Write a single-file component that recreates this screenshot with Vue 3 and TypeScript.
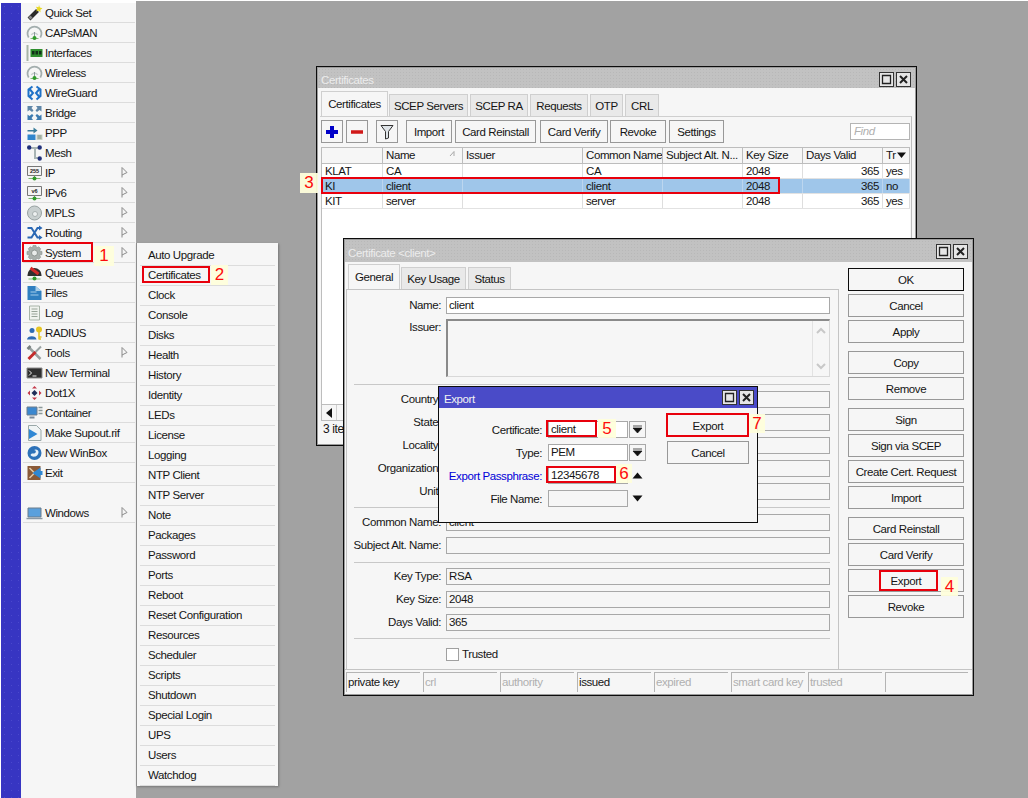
<script setup lang="ts">
interface Shape { d: string; fill?: string; stroke?: string; w?: number }
interface Icon { shapes: Shape[]; label?: string }
interface MenuItem { name: string; arrow?: boolean; icon: string }

const dome: Shape[] = [
  { d: 'M2.2 12.5A7 7 0 1 1 13.800 12.5', fill: 'none', stroke: '#a3aeae', w: 1.8 },
  { d: 'M4.800 10A3.500 3.500 0 0 1 11.200 10', fill: 'none', stroke: '#c9d0d0', w: 1.5 },
  { d: 'M8 7V13', fill: 'none', stroke: '#8a9a9a', w: 1 },
  { d: 'M4 13.500H12', fill: 'none', stroke: '#7fb874', w: 1 },
  { d: 'M6 13a2 2 0 1 0 4 0a2 2 0 1 0 -4 0', fill: '#2f9a2a' },
]
const screen: Shape[] = [
  { d: 'M1 1.500H15V10.500H1Z', fill: '#f4f4f4', stroke: '#777', w: 1 },
  { d: 'M8 10.500V14', fill: 'none', stroke: '#888', w: 1 },
  { d: 'M2 13.500H14', fill: 'none', stroke: '#7fb874', w: 1 },
  { d: 'M6 13.500a2 2 0 1 0 4 0a2 2 0 1 0 -4 0', fill: '#2f9a2a' },
]
const icons: Record<string, Icon> = {
  quick: { shapes: [
    { d: 'M2.500 14L11 5.500', stroke: '#2a2a2a', w: 4, fill: 'none' },
    { d: 'M3 13.500L5 11.500', stroke: '#888', w: 3, fill: 'none' },
    { d: 'M12.500 0L13.400 2.600L16 3.200L13.900 4.800L14 7.400L12.200 5.600L9.800 6.400L10.800 4L9.400 1.800L12 2.200Z', fill: '#e8d820' },
  ] },
  dome: { shapes: dome },
  iface: { shapes: [
    { d: 'M1 0V16', stroke: '#a6b4a6', w: 2, fill: 'none' },
    { d: 'M4 4H16V12H4Z', fill: '#2f8f2f' },
    { d: 'M5.500 6H8V9.500H5.500ZM9 6H11.500V9.500H9ZM12.500 6H15V9.500H12.500Z', fill: '#12301a' },
  ] },
  wg: { shapes: [
    { d: 'M6 1.500L2 4.500V11L6 14.500M3.500 4.500L6.500 8L3.500 11.500', fill: 'none', stroke: '#1f72c8', w: 2 },
    { d: 'M10 1.500L14 4.500V11L10 14.500M12.500 4.500L9.500 8L12.500 11.500', fill: 'none', stroke: '#1f72c8', w: 2 },
  ] },
  bridge: { shapes: [
    { d: 'M1 1H6.500L5 3L7 5.500L5.500 7L3 5L1 6.500Z', fill: '#5f86a8' },
    { d: 'M15 1H9.500L11 3L9 5.500L10.500 7L13 5L15 6.500Z', fill: '#5f86a8' },
    { d: 'M1 15H6.500L5 13L7 10.500L5.500 9L3 11L1 9.500Z', fill: '#3d7bb0' },
    { d: 'M15 15H9.500L11 13L9 10.500L10.500 9L13 11L15 9.500Z', fill: '#3d7bb0' },
  ] },
  ppp: { shapes: [
    { d: 'M1 5H7V2.500L11 5.500L7 8.500V6.500H1Z', fill: '#3a7d9a' },
    { d: 'M1 9.500H9V15H1Z', fill: '#2f86cc' },
    { d: 'M10 9.500H16V15H10Z', fill: '#c8d2c8' },
    { d: 'M11 11H15M11 13H15', stroke: '#7a8a7a', w: 1, fill: 'none' },
  ] },
  mesh: { shapes: [
    { d: 'M3 3H8.500V13H13M8.500 3H13', fill: 'none', stroke: '#a8b4b4', w: 2 },
    { d: 'M0.500 2.500a2.200 2.200 0 1 0 4.400 0a2.200 2.200 0 1 0 -4.400 0ZM11 2.500a2.200 2.200 0 1 0 4.400 0a2.200 2.200 0 1 0 -4.400 0ZM11 13.500a2.200 2.200 0 1 0 4.400 0a2.200 2.200 0 1 0 -4.400 0Z', fill: '#20307a' },
  ] },
  ip: { shapes: screen, label: '255' },
  ipv6: { shapes: screen, label: 'v6' },
  mpls: { shapes: [
    { d: 'M1 8a7 7 0 1 0 14 0a7 7 0 1 0 -14 0Z', fill: '#c9d0d0', stroke: '#98a2a2', w: 1 },
    { d: 'M6 9a2.500 2.500 0 1 0 5 0a2.500 2.500 0 1 0 -5 0Z', fill: '#eef1f1', stroke: '#a8b0b0', w: 1 },
  ] },
  routing: { shapes: [
    { d: 'M1 3H5L11 12.500H14M1 12.500H5L11 3H14', fill: 'none', stroke: '#2b68b4', w: 2 },
    { d: 'M12.500 0.500L16 3L12.500 5.500ZM12.500 10L16 12.500L12.500 15Z', fill: '#2b68b4' },
  ] },
  system: { shapes: [
    { d: 'M6.500 0.500H9.500L10 3L12.300 1.800L14.200 3.700L13 6L15.500 6.500V9.500L13 10L14.200 12.300L12.300 14.200L10 13L9.500 15.500H6.500L6 13L3.700 14.200L1.800 12.300L3 10L0.500 9.500V6.500L3 6L1.800 3.700L3.700 1.800L6 3Z', fill: '#a9b0ad', stroke: '#8a928e', w: 0.6 },
    { d: 'M5 8a3 3 0 1 0 6 0a3 3 0 1 0 -6 0Z', fill: '#e9ecea', stroke: '#8d9490', w: 1 },
  ] },
  queues: { shapes: [
    { d: 'M1 10A7 7 0 0 1 15 10V11H1Z', fill: '#2e2e2e' },
    { d: 'M4 3L12 9', stroke: '#d02828', w: 3, fill: 'none' },
    { d: 'M2 14H14', stroke: '#7fb874', w: 1, fill: 'none' },
    { d: 'M6 13.500a2 2 0 1 0 4 0a2 2 0 1 0 -4 0', fill: '#2f9a2a' },
  ] },
  files: { shapes: [
    { d: 'M1 1H9L15 6V15H1Z', fill: '#2f7fc0' },
    { d: 'M9 1V6H15Z', fill: '#a9cfe8' },
    { d: 'M4 7H10M4 10H12', stroke: '#7eb4dc', w: 1.500, fill: 'none' },
  ] },
  log: { shapes: [
    { d: 'M3 1H13V15H3Z', fill: '#f0f3ee', stroke: '#a8b4a8', w: 1 },
    { d: 'M5 4H11M5 6.500H11M5 9H11M5 11.500H11', stroke: '#98a498', w: 1, fill: 'none' },
  ] },
  radius: { shapes: [
    { d: 'M3 5.500a2.500 2.500 0 1 0 5 0a2.500 2.500 0 1 0 -5 0Z', fill: '#2e6cb4' },
    { d: 'M0.500 14.500C0.500 10 10 10 10 14.500Z', fill: '#2e6cb4' },
    { d: 'M9.500 4.500a3 3 0 1 0 6 0a3 3 0 1 0 -6 0Z', fill: '#e6c522' },
    { d: 'M12.500 7V14.500M12.500 12H15M12.500 14H14.500', stroke: '#e6c522', w: 1.500, fill: 'none' },
  ] },
  tools: { shapes: [
    { d: 'M2 2L14 14', stroke: '#98a0a0', w: 2.500, fill: 'none' },
    { d: 'M1 4L4 1', stroke: '#777f7f', w: 2.500, fill: 'none' },
    { d: 'M14.500 1.500L9 7', stroke: '#9aa2a2', w: 2, fill: 'none' },
    { d: 'M9 7L2 14', stroke: '#c22c2c', w: 3, fill: 'none' },
  ] },
  term: { shapes: [
    { d: 'M0.500 3H15.500V13H0.500Z', fill: '#2f2f2f', stroke: '#8c8c8c', w: 1 },
    { d: 'M2.500 5.500L5 8L2.500 10.500M6 11H10', fill: 'none', stroke: '#f0f0f0', w: 1 },
  ] },
  dot1x: { shapes: [
    { d: 'M8 5L11 8L8 11L5 8Z', fill: '#1f2f5a' },
    { d: 'M8 1L5.500 3.500H10.500ZM8 15L5.500 12.500H10.500ZM1 8L3.500 5.500V10.500ZM15 8L12.500 5.500V10.500Z', fill: '#c43a4a' },
  ] },
  container: { shapes: [
    { d: 'M0.500 2H10.500V10H0.500Z', fill: '#3b88d0', stroke: '#6c7c8c', w: 1 },
    { d: 'M3 12.500H8', stroke: '#7a8a9a', w: 2, fill: 'none' },
    { d: 'M12 2.500H16M12 5.500H16M12 8.500H16', stroke: '#8a9898', w: 1.500, fill: 'none' },
  ] },
  supout: { shapes: [
    { d: 'M2 0.500H10L14.500 5V15.500H2Z', fill: '#f0f4f4', stroke: '#9aa8a8', w: 1 },
    { d: 'M2.500 4L11 9L2.500 14Z', fill: '#2f88d4' },
  ] },
  winbox: { shapes: [
    { d: 'M1 8a7 7 0 1 0 14 0a7 7 0 1 0 -14 0Z', fill: '#2d72b8' },
    { d: 'M4 10C6 13 12 12 12 7C12 5 9.500 3.500 7.500 5C10 5 10 8 7.500 8.500C6 8.800 5 8 4 10Z', fill: '#e8f1f8' },
  ] },
  exit: { shapes: [
    { d: 'M1 1H14V15H1Z', fill: '#8a5a38' },
    { d: 'M3 3L8 8L3 13', fill: 'none', stroke: '#e2c8a8', w: 1.500 },
    { d: 'M6 8L14 2.500V6H16V10H14V13.500Z', fill: '#2f88d4' },
  ] },
  windows: { shapes: [
    { d: 'M1.500 3H14.500V12H1.500Z', fill: '#5aa0dc', stroke: '#6a7c8c', w: 1 },
    { d: 'M0 13.500H16', stroke: '#8a98a4', w: 1.500, fill: 'none' },
  ] },
}

const menu: MenuItem[] = [
  { name: 'Quick Set', icon: 'quick' },
  { name: 'CAPsMAN', icon: 'dome' },
  { name: 'Interfaces', icon: 'iface' },
  { name: 'Wireless', icon: 'dome' },
  { name: 'WireGuard', icon: 'wg' },
  { name: 'Bridge', icon: 'bridge' },
  { name: 'PPP', icon: 'ppp' },
  { name: 'Mesh', icon: 'mesh' },
  { name: 'IP', icon: 'ip', arrow: true },
  { name: 'IPv6', icon: 'ipv6', arrow: true },
  { name: 'MPLS', icon: 'mpls', arrow: true },
  { name: 'Routing', icon: 'routing', arrow: true },
  { name: 'System', icon: 'system', arrow: true },
  { name: 'Queues', icon: 'queues' },
  { name: 'Files', icon: 'files' },
  { name: 'Log', icon: 'log' },
  { name: 'RADIUS', icon: 'radius' },
  { name: 'Tools', icon: 'tools', arrow: true },
  { name: 'New Terminal', icon: 'term' },
  { name: 'Dot1X', icon: 'dot1x' },
  { name: 'Container', icon: 'container' },
  { name: 'Make Supout.rif', icon: 'supout' },
  { name: 'New WinBox', icon: 'winbox' },
  { name: 'Exit', icon: 'exit' },
]
const subItems: string[] = ['Auto Upgrade', 'Certificates', 'Clock', 'Console', 'Disks', 'Health', 'History', 'Identity', 'LEDs', 'License', 'Logging', 'NTP Client', 'NTP Server', 'Note', 'Packages', 'Password', 'Ports', 'Reboot', 'Reset Configuration', 'Resources', 'Scheduler', 'Scripts', 'Shutdown', 'Special Login', 'UPS', 'Users', 'Watchdog']

const certTabs = ['SCEP Servers', 'SCEP RA', 'Requests', 'OTP', 'CRL']
const columns = ['', 'Name', 'Issuer', 'Common Name', 'Subject Alt. N...', 'Key Size', 'Days Valid', 'Tr']
const rows = [
  { sel: false, cells: ['KLAT', 'CA', '', 'CA', '', '2048', '365', 'yes'] },
  { sel: true, cells: ['KI', 'client', '', 'client', '', '2048', '365', 'no'] },
  { sel: false, cells: ['KIT', 'server', '', 'server', '', '2048', '365', 'yes'] },
]
const subjectGroup = ['Country', 'State', 'Locality', 'Organization', 'Unit']
const nameGroup = [{ l: 'Common Name', v: 'client' }, { l: 'Subject Alt. Name', v: '' }]
const keyGroup = [{ l: 'Key Type', v: 'RSA' }, { l: 'Key Size', v: '2048' }, { l: 'Days Valid', v: '365' }]
const buttonGroups = [
  ['OK', 'Cancel', 'Apply'],
  ['Copy', 'Remove'],
  ['Sign', 'Sign via SCEP', 'Create Cert. Request', 'Import'],
  ['Card Reinstall', 'Card Verify', 'Export', 'Revoke'],
]
const flags = [
  { t: 'private key', on: true }, { t: 'crl', on: false }, { t: 'authority', on: false }, { t: 'issued', on: true },
  { t: 'expired', on: false }, { t: 'smart card key', on: false }, { t: 'trusted', on: false }, { t: '', on: false },
]
const redBoxes = [
  [22, 242, 71, 20], [142, 266, 68, 17], [321, 177, 459, 17], [879, 570, 59, 21],
  [546, 420, 51, 17], [546, 466, 70, 17], [666, 413, 83, 24],
]
const marks = [
  { n: '1', x: 94, y: 246, w: 20, h: 20 }, { n: '2', x: 211, y: 265, w: 17, h: 20 },
  { n: '3', x: 300, y: 173, w: 18, h: 20 }, { n: '4', x: 941, y: 577, w: 17, h: 19 },
  { n: '5', x: 598, y: 419, w: 18, h: 19 }, { n: '6', x: 616, y: 464, w: 16, h: 19 },
  { n: '7', x: 749, y: 414, w: 16, h: 19 },
]
function boxStyle(b: number[]) {
  return { left: b[0] + 'px', top: b[1] + 'px', width: b[2] + 'px', height: b[3] + 'px' }
}
function markStyle(m: { x: number; y: number; w: number; h: number }) {
  return { left: m.x + 'px', top: m.y + 'px', width: m.w + 'px', height: m.h + 'px' }
}
</script>

<template>
  <div class="screen">
    <div class="rail"></div>
    <nav class="menu">
      <div v-for="m in menu" :key="m.name" class="menu-row">
        <svg class="ico" viewBox="0 0 16 16" width="16" height="16">
          <path v-for="(s, i) in icons[m.icon].shapes" :key="i" :d="s.d" :fill="s.fill ?? 'none'" :stroke="s.stroke" :stroke-width="s.w" />
          <text v-if="icons[m.icon].label" x="8" y="8.300" text-anchor="middle" class="ico-text">{{ icons[m.icon].label }}</text>
        </svg>
        <span>{{ m.name }}</span>
        <svg v-if="m.arrow" class="more" viewBox="0 0 7 11" width="7" height="11"><path d="M1 .5V10.500M1 .5L6 5.500L1 8" fill="none" stroke="#8a8a8a" /></svg>
      </div>
      <div class="menu-gap"></div>
      <div class="menu-row">
        <svg class="ico" viewBox="0 0 16 16" width="16" height="16">
          <path v-for="(s, i) in icons.windows.shapes" :key="i" :d="s.d" :fill="s.fill ?? 'none'" :stroke="s.stroke" :stroke-width="s.w" />
        </svg>
        <span>Windows</span>
        <svg class="more" viewBox="0 0 7 11" width="7" height="11"><path d="M1 .5V10.500M1 .5L6 5.500L1 8" fill="none" stroke="#8a8a8a" /></svg>
      </div>
    </nav>
    <main class="desk"></main>

    <div class="submenu">
      <div v-for="s in subItems" :key="s" class="sub-row">{{ s }}</div>
    </div>

    <section class="win win-cert">
      <div class="win-in">
        <header class="title inactive">
          <span>Certificates</span>
          <div class="title-btns">
            <button class="tb"><svg viewBox="0 0 13 13" width="13" height="13"><path d="M2.500 2.500H10.500V10.500H2.500Z" fill="none" stroke="#222" stroke-width="1.300" /></svg></button>
            <button class="tb"><svg viewBox="0 0 13 13" width="13" height="13"><path d="M3 3L10 10M10 3L3 10" fill="none" stroke="#222" stroke-width="2" /></svg></button>
          </div>
        </header>
        <div class="tabs cert-tabs">
          <div class="tab active">Certificates</div>
          <div v-for="t in certTabs" :key="t" class="tab">{{ t }}</div>
        </div>
        <div class="cert-panel">
          <div class="toolbar">
            <button class="btn tool"><svg viewBox="0 0 14 14" width="14" height="14"><path d="M7 1V13M1 7H13" stroke="#0000c8" stroke-width="4" fill="none" /></svg></button>
            <button class="btn tool"><svg viewBox="0 0 14 14" width="14" height="14"><path d="M1 7H13" stroke="#d01818" stroke-width="3.500" fill="none" /></svg></button>
            <button class="btn tool gap"><svg viewBox="0 0 14 16" width="14" height="16"><path d="M1 1.500H13L8.500 7.500V14L5.500 15V7.500Z" fill="#dfe4e8" stroke="#333" /></svg></button>
            <button class="btn t-import">Import</button>
            <button class="btn t-reinstall">Card Reinstall</button>
            <button class="btn t-verify">Card Verify</button>
            <button class="btn t-revoke">Revoke</button>
            <button class="btn t-settings">Settings</button>
            <div class="find">Find</div>
          </div>
          <div class="table">
            <div class="t-row t-head">
              <div v-for="(c, i) in columns" :key="i" class="t-cell">
                {{ c }}
                <svg v-if="c === 'Name'" class="sort" viewBox="0 0 7 7" width="7" height="7"><path d="M1 6L5 1.500V6" fill="none" stroke="#a8a8a8" /></svg>
                <svg v-if="c === 'Tr'" class="col-menu" viewBox="0 0 11 7" width="11" height="7"><path d="M1 .5H10L5.500 6Z" fill="#111" /></svg>
              </div>
            </div>
            <div v-for="r in rows" :key="r.cells[0]" class="t-row" :class="{ selected: r.sel }">
              <div v-for="(c, i) in r.cells" :key="i" class="t-cell" :class="{ right: i === 6 }">{{ c }}</div>
            </div>
          </div>
          <div class="hscroll">
            <div class="hs-btn"><svg viewBox="0 0 8 10" width="8" height="10"><path d="M7 0V10L1 5Z" fill="#111" /></svg></div>
          </div>
          <div class="cert-status">3 items</div>
        </div>
      </div>
    </section>

    <section class="win win-dialog">
      <div class="win-in">
        <header class="title inactive">
          <span>Certificate &lt;client&gt;</span>
          <div class="title-btns">
            <button class="tb"><svg viewBox="0 0 13 13" width="13" height="13"><path d="M2.500 2.500H10.500V10.500H2.500Z" fill="none" stroke="#222" stroke-width="1.300" /></svg></button>
            <button class="tb"><svg viewBox="0 0 13 13" width="13" height="13"><path d="M3 3L10 10M10 3L3 10" fill="none" stroke="#222" stroke-width="2" /></svg></button>
          </div>
        </header>
        <div class="dialog-main">
          <div class="dialog-left">
            <div class="tabs dlg-tabs">
              <div class="tab active">General</div>
              <div class="tab">Key Usage</div>
              <div class="tab">Status</div>
            </div>
            <div class="form">
              <div class="f-row"><label>Name:</label><div class="field white">client</div></div>
              <div class="f-row issuer-row">
                <label>Issuer:</label>
                <div class="issuer">
                  <div class="issuer-bar">
                    <svg viewBox="0 0 10 7" width="10" height="7"><path d="M1 6L5 2L9 6" fill="none" stroke="#c8c8c8" stroke-width="2" /></svg>
                    <svg viewBox="0 0 10 7" width="10" height="7"><path d="M1 1L5 5L9 1" fill="none" stroke="#c8c8c8" stroke-width="2" /></svg>
                  </div>
                </div>
              </div>
              <div class="sep s7"></div>
              <div class="f-list">
                <div v-for="l in subjectGroup" :key="l" class="f-row"><label>{{ l }}:</label><div class="field"></div></div>
              </div>
              <div class="sep s7"></div>
              <div class="f-list">
                <div v-for="f in nameGroup" :key="f.l" class="f-row"><label>{{ f.l }}:</label><div class="field">{{ f.v }}</div></div>
              </div>
              <div class="sep s8"></div>
              <div class="f-list">
                <div v-for="f in keyGroup" :key="f.l" class="f-row"><label>{{ f.l }}:</label><div class="field">{{ f.v }}</div></div>
              </div>
              <div class="sep s7"></div>
              <div class="check-row"><span class="check"></span><span>Trusted</span></div>
            </div>
          </div>
          <div class="dialog-btns">
            <div v-for="(g, gi) in buttonGroups" :key="gi" class="btn-group">
              <button v-for="b in g" :key="b" class="btn side" :class="{ primary: b === 'OK' }">{{ b }}</button>
            </div>
          </div>
        </div>
        <div class="status">
          <div v-for="(f, i) in flags" :key="i" class="flag" :class="{ off: !f.on, last: i === 7 }">{{ f.t }}</div>
        </div>
      </div>
    </section>

    <section class="win win-export">
      <div class="win-in">
        <header class="title active-title">
          <span>Export</span>
          <div class="title-btns">
            <button class="tb"><svg viewBox="0 0 13 13" width="13" height="13"><path d="M2.500 2.500H10.500V10.500H2.500Z" fill="none" stroke="#222" stroke-width="1.300" /></svg></button>
            <button class="tb"><svg viewBox="0 0 13 13" width="13" height="13"><path d="M3 3L10 10M10 3L3 10" fill="none" stroke="#222" stroke-width="2" /></svg></button>
          </div>
        </header>
        <div class="export-body">
          <div class="export-form">
            <div class="e-row">
              <label>Certificate:</label><div class="field white e-field">client</div>
              <button class="drop"><svg viewBox="0 0 11 9" width="11" height="9"><path d="M1 1H10M1 3H10L5.500 8Z" fill="#111" stroke="#111" stroke-width=".7" /></svg></button>
            </div>
            <div class="e-row">
              <label>Type:</label><div class="field white e-field">PEM</div>
              <button class="drop"><svg viewBox="0 0 11 9" width="11" height="9"><path d="M1 1H10M1 3H10L5.500 8Z" fill="#111" stroke="#111" stroke-width=".7" /></svg></button>
            </div>
            <div class="e-row">
              <label class="blue">Export Passphrase:</label><div class="field white e-field">12345678</div>
              <svg class="tri" viewBox="0 0 11 7" width="11" height="7"><path d="M.5 6.500H10.500L5.500 .5Z" fill="#111" /></svg>
            </div>
            <div class="e-row">
              <label>File Name:</label><div class="field e-field"></div>
              <svg class="tri" viewBox="0 0 11 7" width="11" height="7"><path d="M.5 .5H10.500L5.500 6.500Z" fill="#111" /></svg>
            </div>
          </div>
          <div class="export-btns">
            <button class="btn e-btn">Export</button>
            <button class="btn e-btn">Cancel</button>
          </div>
        </div>
      </div>
    </section>

    <div v-for="(m, i) in marks" :key="i" class="mark" :style="markStyle(m)">{{ m.n }}</div>
    <div v-for="(b, i) in redBoxes" :key="'b' + i" class="red-box" :style="boxStyle(b)"></div>
  </div>
</template>

<style>
html, body { margin: 0; background: #fff; }
</style>

<style scoped>
* { box-sizing: border-box; }
.screen {
  position: relative; width: 1028px; height: 798px; overflow: hidden; display: flex;
  font-family: "Liberation Sans", Arial, sans-serif; font-size: 11.5px; letter-spacing: -0.4px; color: #151515; background: #fff;
}
.rail {
  width: 20px; margin: 3px 0 0 1px;
  background-color: #3735c2;
  background-image: radial-gradient(#4a48cc 0.6px, transparent 0.7px);
  background-size: 7px 7px;
}
.menu { width: 115px; margin-top: 3px; background: #f6f6f6; padding-left: 2px; }
.menu-row {
  height: 20px; display: flex; align-items: center; gap: 2px; position: relative;
  border-bottom: 1px solid #dcdcdc; margin-right: 1px; padding-left: 3px;
}
.menu-gap { height: 20px; }
.ico { flex: none; width: 17px; height: 16px; }
.ico-text { font-size: 5.500px; font-weight: 700; fill: #222; letter-spacing: 0; }
.more { position: absolute; left: 98px; top: 4px; }
.desk { flex: 1; background: #a2a2a2; margin-top: 1px; }

.submenu {
  position: absolute; left: 136px; top: 243px; width: 142px; height: 543px; padding: 3px 3px 0 3px;
  background: #f6f6f6; border-left: 1px solid #8c8c8c; box-shadow: 1px 1px 2px #777;
}
.sub-row { height: 20px; line-height: 19px; padding-left: 8px; border-bottom: 1px solid #dcdcdc; white-space: nowrap; }

.win { position: absolute; border: 1px solid #0c0c0c; padding: 1px; background: #9b9b9b; }
.win-in { height: 100%; background: #f6f6f6; display: flex; flex-direction: column; }
.win-cert { left: 316px; top: 66px; width: 601px; height: 380px; z-index: 1; }
.win-dialog { left: 343px; top: 238px; width: 631px; height: 458px; z-index: 2; }
.win-export { left: 438px; top: 386px; width: 320px; height: 137px; z-index: 3; padding: 0; background: #f6f6f6; }

.title { height: 22px; flex: none; display: flex; align-items: center; justify-content: space-between; padding: 0 4px 0 3px; }
.win-cert .title { height: 20px; padding-top: 3px; }
.win-cert .title-btns { margin-top: -1px; }
.win-dialog .title { padding-top: 4px; }
.win-dialog .title-btns { margin-top: -4px; }
.inactive {
  color: #ececec;
  background-color: #c2c2c2;
  background-image: radial-gradient(#b8b8b8 0.6px, transparent 0.7px);
  background-size: 3px 3px;
}
.active-title { height: 21px; background: #4a4bc8; color: #f2f2f2; padding: 2px 3px 0 5px; }
.active-title .title-btns { margin-top: -3px; }
.title-btns { display: flex; gap: 2px; }
.tb {
  width: 15px; height: 15px; padding: 0; border: 1px solid #333; background: #e6e6e6;
  display: flex; align-items: center; justify-content: center;
}

.tabs { display: flex; flex: none; align-items: flex-end; }
.tab {
  height: 22px; line-height: 22px; padding: 0 5px; margin-right: 2px; background: #e9e9e9;
  border: 1px solid #cfcfcf; border-bottom: 0; white-space: nowrap;
}
.tab.active { height: 25px; line-height: 25px; background: #f6f6f6; margin-right: 1px; border-color: #cfcfcf; }

.cert-tabs { margin: 3px 0 0 3px; position: relative; }
.cert-tabs .tab { width: 58px; text-align: center; padding: 0; }
.cert-tabs .tab:nth-child(1) { width: 67px; }
.cert-tabs .tab:nth-child(2) { width: 79px; }
.cert-tabs .tab:nth-child(5) { width: 33px; }
.cert-tabs .tab:nth-child(6) { width: 34px; }

.cert-panel { flex: 1; border-top: 1px solid #cfcfcf; margin: 0 3px 0 2px; border-right: 1px solid #bdbdbd; padding: 3px 1px 0 1px; display: flex; flex-direction: column; }
.toolbar { display: flex; align-items: flex-start; flex: none; }
.btn {
  font: inherit; letter-spacing: inherit; color: inherit; height: 23px; padding: 0; background: #f6f6f6; border: 1px solid #989898;
  display: flex; align-items: center; justify-content: center; white-space: nowrap;
}
.tool { width: 22px; margin-right: 3px; }
.tool.gap { margin: 0 8px 0 5px; }
.t-import { width: 46px; margin-right: 3px; }
.t-reinstall { width: 81px; margin-right: 4px; }
.t-verify { width: 68px; margin-right: 2px; }
.t-revoke { width: 56px; margin-right: 3px; }
.t-settings { width: 55px; }
.find {
  margin: 3px 0 0 auto; width: 60px; height: 17px; border: 1px solid #b4b4b4; background: #fff;
  color: #b0b0b0; font-style: italic; padding-left: 3px; line-height: 15px;
}
.table { flex: none; height: 257px; margin-top: 4px; background: #fff; border-left: 1px solid #bdbdbd; }
.t-row { display: grid; grid-template-columns: 61px 80px 120px 80px 80px 60px 80px 27px; height: 15px; border-bottom: 1px solid #e2e2e2; }
.t-head { height: 17px; background: #f6f6f6; border-top: 1px solid #bdbdbd; border-bottom: 1px solid #bdbdbd; }
.t-cell { position: relative; padding: 0 3px; line-height: 14px; border-right: 1px solid #dedede; white-space: nowrap; overflow: hidden; }
.t-head .t-cell { line-height: 15px; border-right-color: #bdbdbd; padding-left: 3px; }
.t-cell.right { text-align: right; }
.selected { background: #9fc6ea; }
.selected .t-cell { border-right-color: #bcd6ef; }
.sort { position: absolute; right: 6px; top: 2px; }
.col-menu { position: absolute; right: 2px; top: 4px; }
.hscroll { height: 16px; flex: none; border-top: 1px solid #bdbdbd; border-left: 1px solid #bdbdbd; display: flex; }
.hs-btn { width: 15px; border-right: 1px solid #d0d0d0; display: flex; align-items: center; justify-content: center; }
.cert-status { flex: 1; border-top: 1px solid #bdbdbd; padding-left: 2px; line-height: 16px; font-size: 12px; }

.dialog-main { flex: 1; display: flex; min-height: 0; }
.dialog-left { width: 493px; margin-left: 1px; display: flex; flex-direction: column; }
.dlg-tabs { margin: 2px 0 0 2px; }
.dlg-tabs .tab:nth-child(1) { width: 52px; text-align: center; }
.dlg-tabs .tab:nth-child(2) { width: 65px; text-align: center; }
.dlg-tabs .tab:nth-child(3) { width: 43px; text-align: center; }
.form { flex: 1; border: 1px solid #c4c4c4; border-bottom: 0; padding-top: 7px; display: flex; flex-direction: column; }
.f-list { display: flex; flex-direction: column; gap: 6px; }
.f-row { display: grid; grid-template-columns: 94px 384px; column-gap: 5px; }
.f-row label { text-align: right; line-height: 16px; white-space: nowrap; }
.field {
  height: 17px; border: 1px solid #a8a8a8; background: #f6f6f6; padding-left: 2px; line-height: 15px;
  overflow: hidden; white-space: nowrap;
}
.white { background: #fff; }
.issuer-row { margin-top: 5px; }
.issuer { height: 58px; border: 1px solid #d8d8d8; border-top: 2px solid #8a8a8a; border-left: 2px solid #8a8a8a; display: flex; justify-content: flex-end; }
.issuer-bar { width: 17px; border-left: 1px solid #e2e2e2; display: flex; flex-direction: column; justify-content: space-between; align-items: center; padding: 6px 0 6px; }
.sep { height: 1px; background: #c8c8c8; margin-left: 7px; width: 476px; }
.s7 { margin-top: 7px; margin-bottom: 6px; }
.s8 { margin-top: 8px; margin-bottom: 5px; }
.check-row { display: flex; align-items: center; gap: 3px; margin: 2px 0 0 99px; height: 14px; }
.check { width: 13px; height: 13px; border: 1px solid #a0a0a0; background: #fff; }
.dialog-btns { margin: 6px 0 0 9px; width: 116px; display: flex; flex-direction: column; gap: 8px; }
.btn-group { display: flex; flex-direction: column; gap: 3px; }
.side { width: 116px; }
.primary { border-color: #0c0c0c; }
.status { flex: none; height: 25px; border-top: 1px solid #c4c4c4; padding: 2px 0 0 1px; display: flex; gap: 3px; }
.flag { width: 74px; height: 20px; border-top: 1px solid #b4b4b4; border-left: 1px solid #b4b4b4; padding-left: 1px; line-height: 18px; white-space: nowrap; overflow: hidden; }
.flag.off { color: #b0b0b0; }
.flag.last { width: 83px; }

.export-body { flex: 1; display: flex; }
.export-form { width: 207px; padding: 13px 0 0 1px; display: flex; flex-direction: column; gap: 6px; }
.e-row { display: grid; column-gap: 0; grid-template-columns: 102px 6px 80px 1px 17px; align-items: center; height: 17px; }
.e-row > label { grid-column: 1; text-align: right; white-space: nowrap; }
.e-field { grid-column: 3; }
.drop {
  grid-column: 5; width: 17px; height: 17px; padding: 0; border: 1px solid #a8a8a8; background: #f6f6f6;
  display: flex; align-items: center; justify-content: center;
}
.tri { grid-column: 5; justify-self: center; }
.blue { color: #0000d8; }
.export-btns { margin: 6px 0 0 21px; display: flex; flex-direction: column; gap: 4px; }
.e-btn { width: 82px; }

.mark {
  position: absolute; z-index: 5; background: #ffffdc; color: #f00; font-size: 17px; line-height: 20px;
  text-align: center; opacity: .95; letter-spacing: 0;
}
.red-box { position: absolute; z-index: 6; border: 2px solid #e8000c; }
</style>
